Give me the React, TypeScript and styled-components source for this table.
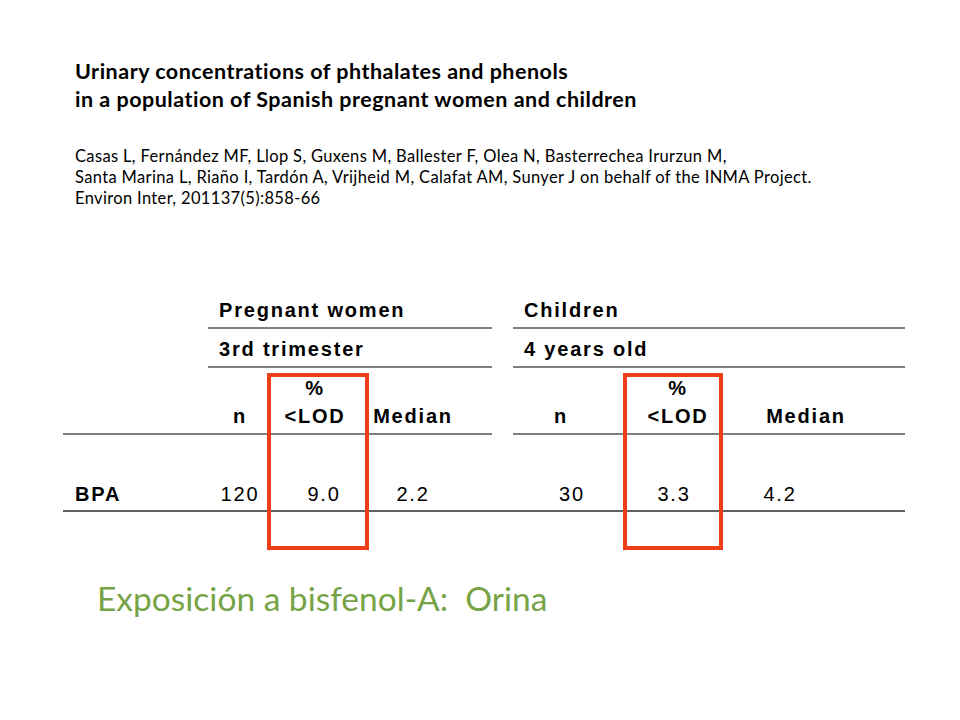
import React from "react";
import styled, { createGlobalStyle } from "styled-components";

const Global = createGlobalStyle`
  html, body { margin: 0; padding: 0; background: #ffffff; }
  body { width: 960px; height: 720px; overflow: hidden; }
`;

const Slide = styled.div`
  width: 960px;
  height: 720px;
  box-sizing: border-box;
  padding-top: 57px;
  display: flex;
  flex-direction: column;
  background: #ffffff;
  color: #000000;
`;

const Header = styled.header`
  margin-left: 75px;
  display: flex;
  flex-direction: column;
  font-family: Lato, "Open Sans", sans-serif;
  font-variant-ligatures: none;
`;

const Title = styled.h1`
  margin: 0;
  font-size: 21.5px;
  font-weight: 700;
  letter-spacing: 0.5px;
  line-height: 28px;
`;

const Citation = styled.p`
  margin: 33px 0 0 0;
  font-size: 16.5px;
  font-weight: 400;
  letter-spacing: 0.35px;
  line-height: 21px;
`;

const TableWrap = styled.div`
  position: relative;
  margin: 89px 0 0 63px;
  width: 842px;
  display: grid;
  grid-template-columns: 145px 284px 21px 392px;
  font-family: "Liberation Sans", Arial, sans-serif;
  font-size: 20px;
  letter-spacing: 1.8px;
  line-height: 24px;
`;

const GroupCell = styled.div<{ $pt: number; $pb: number }>`
  padding: ${(p) => p.$pt}px 0 ${(p) => p.$pb}px 11px;
  font-weight: 700;
  border-bottom: 2px solid #7f7f7f;
`;

const Blank = styled.div<{ $line?: boolean }>`
  border-bottom: ${(p) => (p.$line ? "2px solid #7f7f7f" : "none")};
`;

const SubHeader = styled.div<{ $cols: string }>`
  display: grid;
  grid-template-columns: ${(p) => p.$cols};
  align-items: end;
  padding: 6px 0 3px 0;
  border-bottom: 2px solid #7f7f7f;
  font-weight: 700;
  line-height: 28px;
`;

const ColHead = styled.div`
  text-align: center;
`;

const DataRow = styled.div`
  grid-column: 1 / -1;
  display: grid;
  grid-template-columns: 145px 284px 21px 392px;
  padding: 47px 0 4px 0;
  border-bottom: 2px solid #5f5f5f;
`;

const RowLabel = styled.div`
  padding-left: 12px;
  font-weight: 700;
`;

const Values = styled.div<{ $cols: string }>`
  display: grid;
  grid-template-columns: ${(p) => p.$cols};
`;

const Value = styled.div<{ $shift?: number }>`
  text-align: center;
  padding-left: ${(p) => (p.$shift && p.$shift > 0 ? p.$shift * 2 : 0)}px;
  padding-right: ${(p) => (p.$shift && p.$shift < 0 ? -p.$shift * 2 : 0)}px;
`;

const Highlight = styled.div<{ $left: number; $width: number }>`
  position: absolute;
  top: 75px;
  left: ${(p) => p.$left}px;
  width: ${(p) => p.$width}px;
  height: 177px;
  box-sizing: border-box;
  border: 4px solid #ee3e17;
  pointer-events: none;
`;

const Subtitle = styled.h2`
  margin: 66px 0 0 97px;
  font-family: Lato, "Open Sans", sans-serif;
  font-weight: 400;
  font-size: 33.5px;
  line-height: 40px;
  color: #77a347;
`;

const leftCols = "64px 86px 110px 1fr";
const rightCols = "96px 138px 118px 1fr";

export default function App() {
  return (
    <>
      <Global />
      <Slide>
        <Header>
          <Title>
            Urinary concentrations of phthalates and phenols
            <br />
            in a population of Spanish pregnant women and children
          </Title>
          <Citation>
            Casas L, Fernández MF, Llop S, Guxens M, Ballester F, Olea N, Basterrechea Irurzun M,
            <br />
            Santa Marina L, Riaño I, Tardón A, Vrijheid M, Calafat AM, Sunyer J on behalf of the INMA Project.
            <br />
            Environ Inter, 201137(5):858-66
          </Citation>
        </Header>

        <TableWrap>
          <Blank />
          <GroupCell $pt={0} $pb={5}>Pregnant women</GroupCell>
          <Blank />
          <GroupCell $pt={0} $pb={5}>Children</GroupCell>

          <Blank />
          <GroupCell $pt={8} $pb={5}>3rd trimester</GroupCell>
          <Blank />
          <GroupCell $pt={8} $pb={5}>4 years old</GroupCell>

          <Blank $line />
          <SubHeader $cols={leftCols}>
            <ColHead>n</ColHead>
            <ColHead>
              %
              <br />
              &lt;LOD
            </ColHead>
            <ColHead>Median</ColHead>
          </SubHeader>
          <Blank />
          <SubHeader $cols={rightCols}>
            <ColHead>n</ColHead>
            <ColHead>
              %
              <br />
              &lt;LOD
            </ColHead>
            <ColHead>Median</ColHead>
          </SubHeader>

          <DataRow>
            <RowLabel>BPA</RowLabel>
            <Values $cols={leftCols}>
              <Value>120</Value>
              <Value $shift={9}>9.0</Value>
              <Value>2.2</Value>
            </Values>
            <div />
            <Values $cols={rightCols}>
              <Value $shift={11}>30</Value>
              <Value $shift={-4}>3.3</Value>
              <Value $shift={-26}>4.2</Value>
            </Values>
          </DataRow>

          <Highlight $left={204} $width={102} />
          <Highlight $left={560} $width={100} />
        </TableWrap>

        <Subtitle>Exposición a bisfenol-A:&nbsp; Orina</Subtitle>
      </Slide>
    </>
  );
}
